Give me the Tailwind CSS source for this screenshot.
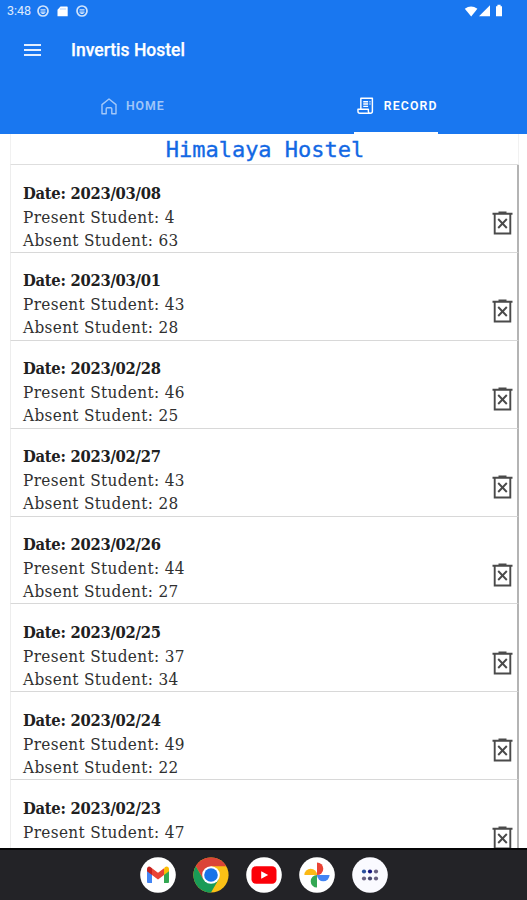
<!DOCTYPE html>
<html lang="en">
<head>
<meta charset="utf-8">
<title>Invertis Hostel</title>
<script src="https://cdn.jsdelivr.net/npm/@tailwindcss/browser@4"></script>
</head>
<body class="bg-white">
<div class="w-[527px] h-[900px] flex flex-col overflow-hidden font-['Roboto',sans-serif]">
  <header class="h-[134px] shrink-0 bg-[#1977f0] text-white flex flex-col">
    <div class="h-[22px] flex items-center pl-[7px] pr-[22px] text-[12.5px]">
      <span class="w-[24px] text-white/85 whitespace-nowrap">3:48</span>
      <svg class="ml-[6px] text-white/80" width="12" height="12" viewBox="0 0 12 12" fill="none" stroke="currentColor"><circle cx="6" cy="6" r="5" stroke-width="1.7"/><path d="M3.5 4.8h5M3.5 7.2h5M4.5 8.5h3" stroke-width="1.2"/></svg>
      <svg class="ml-[8px]" width="11" height="11" viewBox="0 0 11 11" fill="white"><path d="M3.5.5H10a.7.7 0 0 1 .7.7v9H.5V3.7z"/><path d="M4 2v2M6 2v2M8 2v2" stroke="#8dbbf8" stroke-width=".7"/></svg>
      <svg class="ml-[8px] text-white/80" width="12" height="12" viewBox="0 0 12 12" fill="none" stroke="currentColor"><circle cx="6" cy="6" r="5" stroke-width="1.7"/><path d="M3.5 4.8h5M3.5 7.2h5M4.5 8.5h3" stroke-width="1.2"/></svg>
      <svg class="ml-auto" width="41" height="14" viewBox="0 0 41 14" fill="white"><path d="M.8 4.8Q7 .2 13.4 4.8L7.2 12.4z"/><path d="M26 1.2v11H15z"/><path d="M32 2.2h1.4V.8h3.2v1.4H38v10.1h-6z"/></svg>
    </div>
    <div class="h-[57px] flex items-center pl-[24px]">
      <svg class="-mt-[1px]" width="17" height="12" viewBox="0 0 17 12" stroke="#e4efff" stroke-width="1.8"><path d="M0 1h17M0 6h17M0 11h17"/></svg>
      <h1 class="ml-[30px] text-[17.5px] font-medium leading-none [-webkit-text-stroke:0.25px_white]">Invertis Hostel</h1>
    </div>
    <nav class="h-[55px] grid grid-cols-2">
      <div class="flex items-center pl-[101px] text-white/60 text-[12.3px] font-semibold">
        <svg width="16" height="17" viewBox="0 0 16 17" fill="none" stroke="currentColor" stroke-width="1.4" stroke-linejoin="round"><path d="M1 15.8V6.6L8 1l7 5.6v9.2h-4.2v-5.1a1 1 0 0 0-1-1H6.2a1 1 0 0 0-1 1v5.1z"/></svg>
        <span class="ml-[9px] tracking-[0.9px]">HOME</span>
      </div>
      <div class="flex pl-[90px]">
        <div class="h-full w-[84px] border-b-2 border-white flex items-center pl-[3px] pt-[1px] text-[12.3px] font-semibold">
          <svg width="18" height="18" viewBox="0 0 18 18" fill="none" stroke="white" stroke-width="1.5" stroke-linejoin="round"><path d="M4 12V1h12v13.5a2 2 0 0 1-2 2H3a2 2 0 0 1-2-2V12.3h10.8v2.2a2 2 0 0 0 2.2 2M6.5 4.5h5M6.5 7h5M6.5 9.4h5M13 4.5h1M13 7h1"/></svg>
          <span class="ml-[10px] tracking-[1.1px]">RECORD</span>
        </div>
      </div>
    </nav>
  </header>
  <main class="h-[714px] shrink-0 overflow-hidden bg-white pl-[10px] pr-[8px] text-[#303030]">
    <h2 class="h-[31px] border-x border-b border-x-[#f1f1f1] border-b-[#dedede] text-center text-[#1268e4] text-[22px] leading-[32px] pl-[1px] font-['DejaVu_Sans_Mono',monospace] [-webkit-text-stroke:0.35px_#1268e4]">Himalaya Hostel</h2>
    <div id="records"></div>
  </main>
  <footer class="h-[52px] shrink-0 bg-[#232327] border-t-2 border-[#050506] flex justify-center items-center gap-[17px] pb-[1px]">
    <svg width="36" height="36" viewBox="0 0 36 36"><circle cx="18" cy="18" r="17.8" fill="white"/><path d="M7 12v12.8c0 .8.5 1.2 1.2 1.2H12V15z" fill="#4285f4"/><path d="M24 15v11h3.8c.7 0 1.2-.4 1.2-1.2V12z" fill="#34a853"/><path d="M24 11.5V18l5-3.8V12c0-2.5-2.5-3.2-4.2-1.8z" fill="#fbbc04"/><path d="M12 18v-6.8l6 4.5 6-4.5V18l-6 4.5z" fill="#ea4335"/><path d="M7 12v2.2l5 3.8v-6.8l-1.2-1C9.1 8.9 7 9.8 7 12z" fill="#c5221f"/></svg>
    <svg width="36" height="36" viewBox="0 0 36 36"><circle cx="18" cy="18" r="17.6" fill="#fbc116"/><path d="M2.8 9.2A17.6 17.6 0 0 1 33.2 9.2H18L10.4 22.4z" fill="#db4437"/><path d="M2.8 9.2A17.6 17.6 0 0 0 18 35.6l7.6-13.2L18 26l-7.6-3.6z" fill="#199b57"/><circle cx="18" cy="18" r="8.8" fill="white"/><circle cx="18" cy="18" r="6.8" fill="#1a73e8"/></svg>
    <svg width="36" height="36" viewBox="0 0 36 36"><circle cx="18" cy="18" r="17.8" fill="white"/><rect x="5.5" y="9.3" width="25" height="17.5" rx="4.5" fill="#fb0008"/><path d="M15.2 14.2v7.6l7-3.8z" fill="white"/></svg>
    <svg width="36" height="36" viewBox="0 0 36 36"><circle cx="18" cy="18" r="17.8" fill="white"/><path d="M18 18V5.4a6.3 6.3 0 0 1 0 12.6z" fill="#ea4335"/><path d="M18 18h12.6a6.3 6.3 0 0 1-12.6 0z" fill="#4285f4"/><path d="M18 18v12.6a6.3 6.3 0 0 1 0-12.6z" fill="#34a853"/><path d="M18 18H5.4a6.3 6.3 0 0 1 12.6 0z" fill="#fbb914"/></svg>
    <svg width="36" height="36" viewBox="0 0 36 36"><circle cx="18" cy="18" r="17.8" fill="#fafaff"/><g fill="#686080"><circle cx="12" cy="14.5" r="2.1" fill="#294f9d"/><circle cx="18" cy="14.5" r="2.1" fill="#17177f"/><circle cx="24" cy="14.5" r="2.1"/><circle cx="12" cy="21.5" r="2.1"/><circle cx="18" cy="21.5" r="2.1" fill="#494970"/><circle cx="24" cy="21.5" r="2.1"/></g></svg>
  </footer>
</div>
<template id="row">
  <article class="h-[87.9px] border-b border-b-[#d8d8d8] border-l border-l-[#ededed] border-r-2 border-r-[#b4b4b4] flex pl-[12px] pr-[4px] pt-[16.6px] whitespace-nowrap font-['DejaVu_Serif_Condensed','DejaVu_Serif',serif] font-stretch-condensed">
    <div class="grow">
      <p class="text-[16.4px] leading-[23px] font-bold text-[#202020] tracking-[-0.27px]"></p>
      <p class="text-[17px] leading-[24px] tracking-[0.35px]"></p>
      <p class="text-[17px] leading-[22px] tracking-[0.35px]"></p>
    </div>
    <svg class="mt-[29.5px] shrink-0" width="21" height="24" viewBox="0 0 21 24" fill="none" stroke="#4a4a4a" stroke-width="1.9"><path d="M.5 2.8h20M6.5 1.4h8M2.7 2.8v19.7h15.6V2.8"/><path d="M6.2 8l8.6 9M14.8 8l-8.6 9"/></svg>
  </article>
</template>
<script>
const records = [["2023/03/08",4,63],["2023/03/01",43,28],["2023/02/28",46,25],["2023/02/27",43,28],["2023/02/26",44,27],["2023/02/25",37,34],["2023/02/24",49,22],["2023/02/23",47]];
for (const [date, present, absent] of records) {
  const row = document.getElementById("row").content.cloneNode(true);
  const lines = row.querySelectorAll("p");
  lines[0].textContent = "Date: " + date;
  lines[1].textContent = "Present Student: " + present;
  if (absent !== undefined) lines[2].textContent = "Absent Student: " + absent;
  document.getElementById("records").append(row);
}
</script>
</body>
</html>
